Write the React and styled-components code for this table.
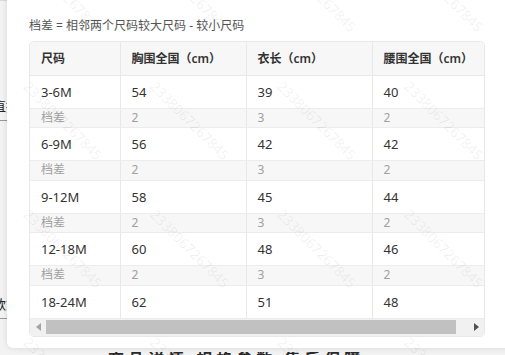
import styled, { createGlobalStyle } from 'styled-components'

const GlobalStyle = createGlobalStyle`
  html, body {
    margin: 0;
    padding: 0;
    width: 505px;
    height: 355px;
    overflow: hidden;
    background: #f3f3f3;
  }
  body {
    font-family: "Noto Sans", "Noto Sans CJK SC", sans-serif;
    color: #333;
  }
`

const columns = ['尺码', '胸围全国（cm）', '衣长（cm）', '腰围全国（cm）']
const colWidths = [90, 126, 126, 126]

const sizes = [
  { size: '3-6M', values: [54, 39, 40] },
  { size: '6-9M', values: [56, 42, 42] },
  { size: '9-12M', values: [58, 45, 44] },
  { size: '12-18M', values: [60, 48, 46] },
  { size: '18-24M', values: [62, 51, 48] }
]

const diffs = [2, 3, 2]

export default function App() {
  const rows = []
  sizes.forEach((s, i) => {
    rows.push({ kind: 'size', label: s.size, values: s.values })
    if (i < sizes.length - 1) rows.push({ kind: 'diff', label: '档差', values: diffs })
  })

  return (
    <Page>
      <GlobalStyle />
      <SideList>
        <SideItem>直播</SideItem>
        <SideItem $top={173}>款式</SideItem>
      </SideList>
      <BottomStrip>
        <BottomText>商品详情 规格参数 售后保障</BottomText>
      </BottomStrip>

      <Modal>
        <Caption>档差 = 相邻两个尺码较大尺码 - 较小尺码</Caption>
        <TableBox>
          <ScrollArea>
            <Table>
              <colgroup>
                {colWidths.map((w, i) => (
                  <col key={i} style={{ width: w }} />
                ))}
              </colgroup>
              <thead>
                <tr>
                  {columns.map((c) => (
                    <Th key={c}>{c}</Th>
                  ))}
                </tr>
              </thead>
              <tbody>
                {rows.map((r, i) => (
                  <Row key={i} $diff={r.kind === 'diff'}>
                    <Td $diff={r.kind === 'diff'}>{r.label}</Td>
                    {r.values.map((v, j) => (
                      <Td key={j} $diff={r.kind === 'diff'}>
                        {v}
                      </Td>
                    ))}
                  </Row>
                ))}
              </tbody>
            </Table>
          </ScrollArea>
          <ScrollBar>
            <ArrowButton>
              <svg width="5" height="8" viewBox="0 0 5 8">
                <path d="M5 0 L0 4 L5 8 Z" fill="#a3a3a3" />
              </svg>
            </ArrowButton>
            <Track>
              <Thumb />
            </Track>
            <ArrowButton>
              <svg width="5" height="8" viewBox="0 0 5 8">
                <path d="M0 0 L5 4 L0 8 Z" fill="#505050" />
              </svg>
            </ArrowButton>
          </ScrollBar>
        </TableBox>
      </Modal>

      <Watermarks>
        {Array.from({ length: 16 }).map((_, i) => (
          <MarkCell key={i}>
            <Mark>2338067267845</Mark>
          </MarkCell>
        ))}
      </Watermarks>
    </Page>
  )
}

const Page = styled.div`
  position: relative;
  width: 505px;
  height: 355px;
  overflow: hidden;
  background: #f3f3f3;
`

const SideList = styled.div`
  display: flex;
  flex-direction: column;
  padding-top: 95px;
  margin-left: -7px;
  border-top: 1px solid #dcdcdc;
`

const SideItem = styled.div`
  font-size: 13px;
  line-height: 20px;
  color: #222;
  margin-top: ${(p) => (p.$top ? p.$top + 'px' : '0')};
  padding-bottom: 4px;
  border-bottom: 1px solid #9a9a9a;
  width: 60px;
`

const BottomStrip = styled.div`
  position: absolute;
  left: 0;
  right: 0;
  bottom: 0;
  height: 3px;
  overflow: hidden;
`

const BottomText = styled.div`
  padding: 0 0 0 108px;
  font-size: 16px;
  line-height: 14px;
  font-weight: 700;
  letter-spacing: 4px;
  color: #2a2a2a;
`

const Modal = styled.div`
  position: absolute;
  left: 7px;
  top: -20px;
  width: 530px;
  height: 368px;
  box-sizing: border-box;
  background: #fff;
  border-radius: 6px;
  box-shadow: 0 0 6px rgba(0, 0, 0, 0.12);
  padding: 38px 0 0 22px;
`

const Caption = styled.div`
  font-size: 12px;
  line-height: 16px;
  color: #555;
  margin-bottom: 7px;
`

const TableBox = styled.div`
  width: 456px;
  border: 1px solid #e8e8e8;
  border-radius: 5px;
  overflow: hidden;
  box-sizing: border-box;
  background: #fff;
`

const ScrollArea = styled.div`
  overflow: hidden;
`

const Table = styled.table`
  width: 468px;
  border-collapse: collapse;
  table-layout: fixed;
`

const Th = styled.th`
  height: 33px;
  padding: 0 11px;
  text-align: left;
  font-size: 12px;
  font-weight: 600;
  color: #333;
  background: #f7f7f7;
  border-right: 1px solid #e8e8e8;
  border-bottom: 1px solid #e8e8e8;
  box-sizing: border-box;
  white-space: nowrap;
`

const Row = styled.tr`
  height: ${(p) => (p.$diff ? '19.5px' : '33px')};
  background: ${(p) => (p.$diff ? '#f7f7f7' : '#fff')};
`

const Td = styled.td`
  padding: 0 11px;
  font-size: ${(p) => (p.$diff ? '12px' : '13px')};
  color: ${(p) => (p.$diff ? '#a0a0a0' : '#333')};
  line-height: 16px;
  border-right: 1px solid #e8e8e8;
  border-bottom: 1px solid #ececec;
  box-sizing: border-box;
  white-space: nowrap;
`

const ScrollBar = styled.div`
  display: flex;
  align-items: center;
  height: 17px;
  background: #f1f1f1;
`

const ArrowButton = styled.div`
  width: 16px;
  height: 17px;
  display: flex;
  align-items: center;
  justify-content: center;
  flex-shrink: 0;
`

const Track = styled.div`
  flex: 1;
  height: 17px;
  display: flex;
  align-items: center;
`

const Thumb = styled.div`
  width: 410px;
  height: 14px;
  background: #c1c1c1;
`

const Watermarks = styled.div`
  position: absolute;
  left: 0;
  top: -72px;
  width: 508px;
  display: flex;
  flex-wrap: wrap;
  pointer-events: none;
`

const MarkCell = styled.div`
  width: 127px;
  height: 128px;
  display: flex;
  align-items: center;
  justify-content: center;
`

const Mark = styled.span`
  transform: rotate(45deg);
  font-family: "Noto Sans", sans-serif;
  font-size: 14px;
  color: rgba(0, 0, 0, 0.065);
  white-space: nowrap;
`
